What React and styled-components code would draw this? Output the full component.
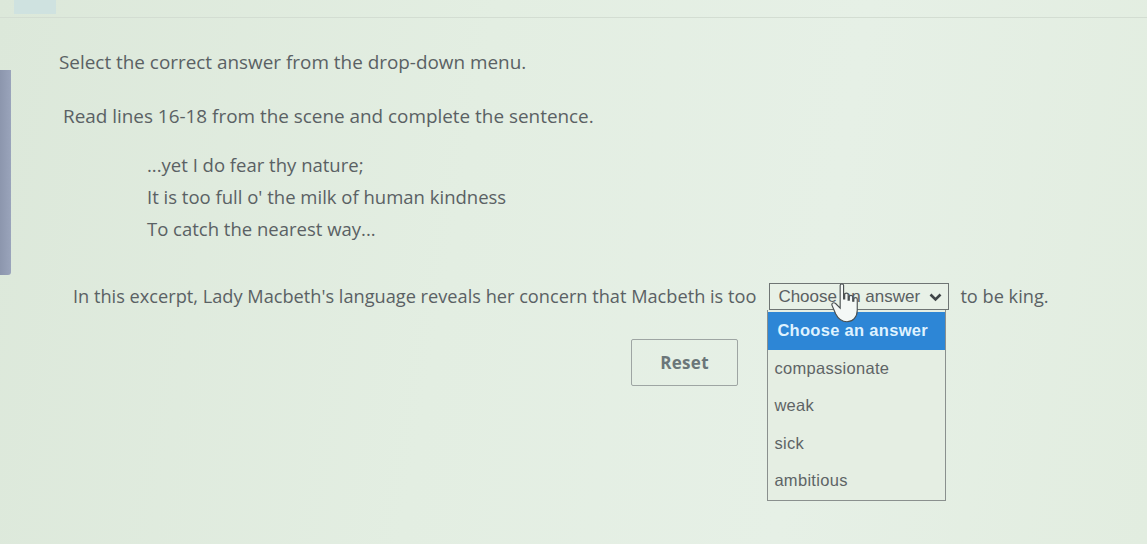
import React from "react";
import styled, { createGlobalStyle } from "styled-components";

const Global = createGlobalStyle`
  html, body { margin: 0; padding: 0; }
  body {
    width: 1147px;
    height: 544px;
    overflow: hidden;
    background: #e2ece0;
    font-family: "Open Sans", "Liberation Sans", sans-serif;
  }
`;

const Page = styled.div`
  position: relative;
  width: 1147px;
  height: 544px;
  overflow: hidden;
  background: linear-gradient(100deg, #dce8da 0%, #e3eee2 40%, #e6f0e6 70%, #e2ede0 100%);
  display: grid;
  grid-template-columns: 12px 1fr;
  grid-template-rows: 18px 1fr;
`;

const TopBar = styled.div`
  grid-column: 1 / 3;
  display: flex;
  align-items: flex-start;
  border-bottom: 1px solid #d3ddd2;
`;

const TopTab = styled.div`
  margin-left: 14px;
  width: 42px;
  height: 14px;
  background: #cfe2e0;
`;

const Rail = styled.div`
  margin-top: 52px;
  height: 205px;
  width: 11px;
  background: linear-gradient(90deg, #8c96ad, #9aa4bb);
  border-radius: 0 0 3px 0;
`;

const Content = styled.main`
  position: relative;
  padding: 31px 0 0 47px;
  color: #5a6164;
`;

const Instruction = styled.p`
  margin: 0;
  font-size: 18.9px;
  line-height: 26px;
`;

const Prompt = styled.p`
  margin: 28px 0 0 4px;
  font-size: 18.9px;
  line-height: 26px;
`;

const Poem = styled.div`
  margin: 20px 0 0 88px;
  display: flex;
  flex-direction: column;
  font-size: 18.5px;
  line-height: 32px;
`;

const Sentence = styled.div`
  margin: 38px 0 0 14px;
  display: flex;
  align-items: center;
  font-size: 18.2px;
  line-height: 27px;
  white-space: nowrap;
`;

const SelectWrap = styled.div`
  position: relative;
  margin: 0 11px 0 13px;
`;

const SelectBox = styled.div`
  width: 180px;
  height: 27px;
  box-sizing: border-box;
  border: 1px solid #6f7574;
  background: #e8f1e7;
  display: flex;
  align-items: center;
  justify-content: space-between;
  padding: 0 6px 0 8px;
  font-family: "Liberation Sans", Arial, sans-serif;
  font-size: 17px;
  color: #5a6062;
`;

const Menu = styled.ul`
  position: absolute;
  left: -2px;
  top: 27px;
  width: 177px;
  margin: 0;
  padding: 2px 0 0 0;
  list-style: none;
  border: 1px solid #8a908e;
  border-top: none;
  background: #e5eee3;
  font-family: "Liberation Sans", Arial, sans-serif;
  font-size: 16.5px;
  z-index: 2;
`;

const Option = styled.li`
  height: 37.5px;
  display: flex;
  align-items: center;
  padding-left: ${(p) => (p.$active ? 9 : 6)}px;
  background: ${(p) => (p.$active ? "#2d86d6" : "transparent")};
  color: ${(p) => (p.$active ? "#dff2ff" : "#5e6466")};
  font-weight: ${(p) => (p.$active ? 700 : 400)};
  letter-spacing: 0.3px;
`;

const ResetButton = styled.button`
  margin: 29px 0 0 572px;
  width: 107px;
  height: 47px;
  border: 1px solid #9ea5a3;
  border-radius: 2px;
  background: transparent;
  font-family: "Open Sans", "Liberation Sans", sans-serif;
  font-size: 17px;
  font-weight: 700;
  color: #6b7679;
  letter-spacing: 0.3px;
`;

const Cursor = styled.svg`
  position: absolute;
  left: 62px;
  top: 0px;
  width: 32px;
  height: 41px;
  z-index: 3;
`;

const options = ["Choose an answer", "compassionate", "weak", "sick", "ambitious"];

export default function App() {
  return (
    <>
      <Global />
      <Page>
        <TopBar>
          <TopTab />
        </TopBar>
        <Rail />
        <Content>
          <Instruction>Select the correct answer from the drop-down menu.</Instruction>
          <Prompt>Read lines 16-18 from the scene and complete the sentence.</Prompt>
          <Poem>
            <span>...yet I do fear thy nature;</span>
            <span>It is too full o' the milk of human kindness</span>
            <span>To catch the nearest way...</span>
          </Poem>
          <Sentence>
            <span>In this excerpt, Lady Macbeth's language reveals her concern that Macbeth is too</span>
            <SelectWrap>
              <SelectBox>
                <span>Choose an answer</span>
                <svg width="13" height="10" viewBox="0 0 13 10">
                  <path d="M1.5 2.5 L6.5 7.5 L11.5 2.5" fill="none" stroke="#3f4547" strokeWidth="2.6" />
                </svg>
              </SelectBox>
              <Cursor viewBox="0 0 28 36">
                <path
                  d="M8 2 C8 0.5 11 0.5 11 2 L11 14 L12 14 L12 10 C12 8.5 15 8.5 15 10 L15 15 L16 15 L16 12 C16 10.5 19 10.5 19 12 L19 16 L20 16 L20 14 C20 12.5 23 12.5 23 14 L23 24 C23 30 19 34 14 34 C9 34 6 31 4 27 L1 20 C0 18 2 16.5 4 18 L8 22 Z"
                  fill="#f4f8f6"
                  stroke="#4a5052"
                  strokeWidth="1"
                />
              </Cursor>
              <Menu>
                {options.map((o, i) => (
                  <Option key={o} $active={i === 0}>{o}</Option>
                ))}
              </Menu>
            </SelectWrap>
            <span>to be king.</span>
          </Sentence>
          <ResetButton>Reset</ResetButton>
        </Content>
      </Page>
    </>
  );
}
